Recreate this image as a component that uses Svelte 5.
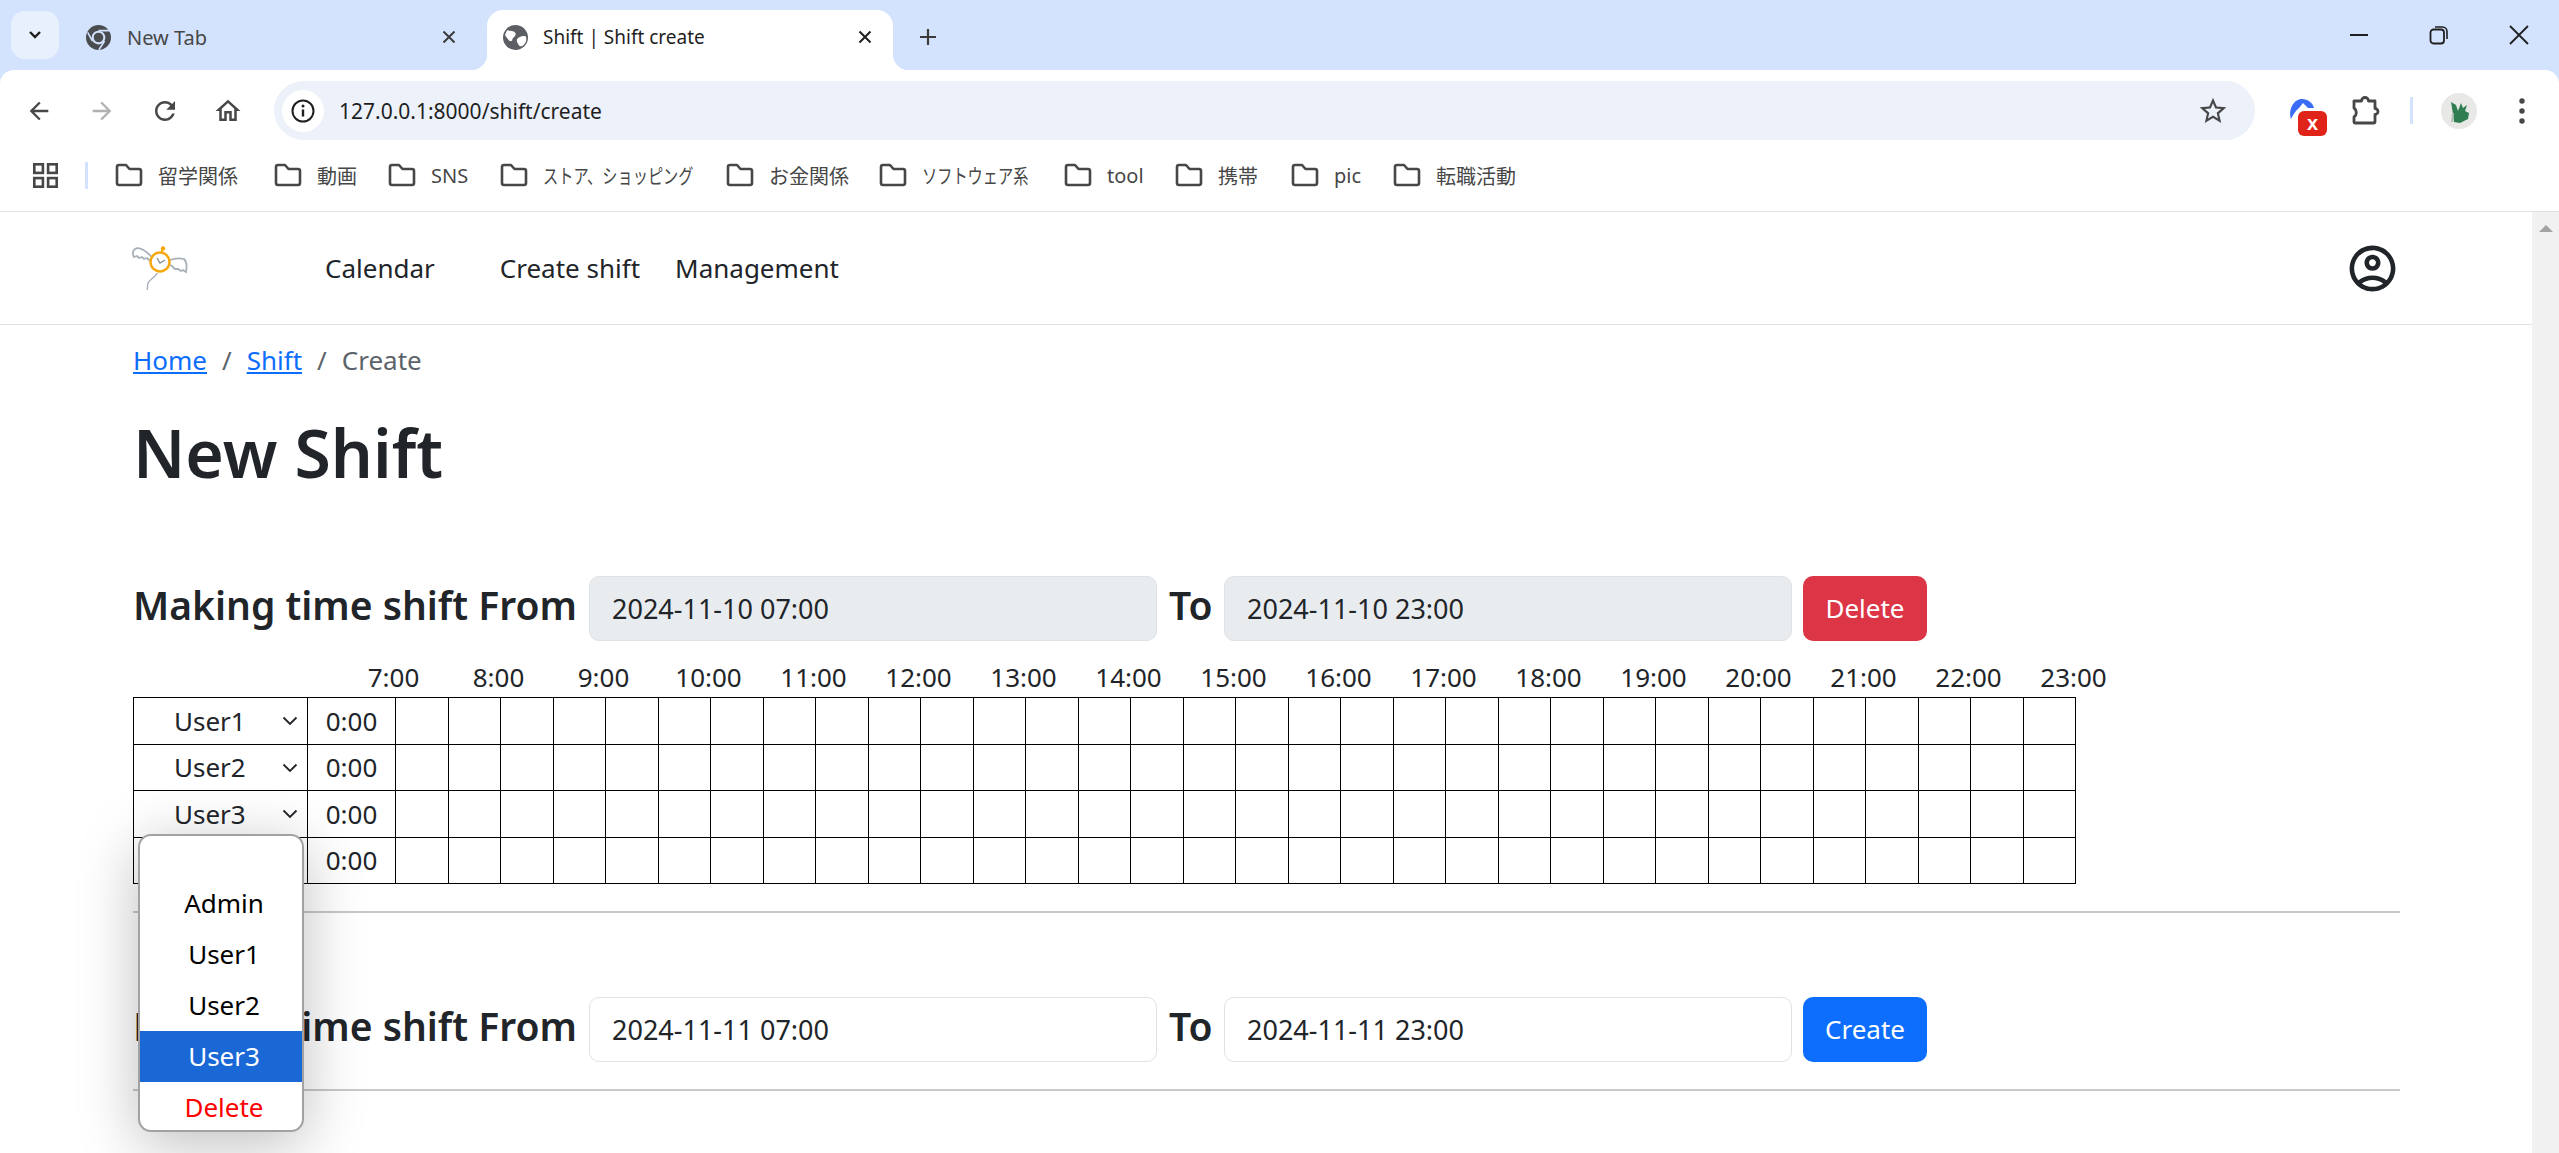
<script>
	const bookmarks = [
		{ label: '留学関係', width: 159 },
		{ label: '動画', width: 114 },
		{ label: 'SNS', width: 112 },
		{ label: 'ストア、ショッピング', width: 226, narrow: true },
		{ label: 'お金関係', width: 153 },
		{ label: 'ソフトウェア系', width: 185, narrow: true },
		{ label: 'tool', width: 111 },
		{ label: '携帯', width: 116 },
		{ label: 'pic', width: 102 },
		{ label: '転職活動', width: 124 }
	];

	const hours = Array.from({ length: 17 }, (_, i) => `${i + 7}:00`);
	const cells = Array.from({ length: 32 }, (_, i) => i);
	const rows = ['User1', 'User2', 'User3', ''];
	const options = ['Admin', 'User1', 'User2', 'User3'];
</script>

<div class="window">
	<div class="tabstrip">
		<button class="tab-search" aria-label="Search tabs">
			<svg width="14" height="10" viewBox="0 0 14 10"><path d="M2 2l5 5 5-5" fill="none" stroke="#1f1f1f" stroke-width="2.4"/></svg>
		</button>
		<div class="tab">
			<svg class="favicon" viewBox="0 0 24 24">
				<circle cx="12" cy="12" r="12" fill="#4a4d50"/>
				<circle cx="12" cy="12" r="6.6" fill="#d3e3fd"/>
				<circle cx="12" cy="12" r="4.6" fill="#4a4d50"/>
				<path d="M12 5.4h10.4M6.2 15.4L1.6 7M17.8 15.4l-5.4 8.4" stroke="#d3e3fd" stroke-width="1.5" fill="none"/>
			</svg>
			<span class="tab-title">New Tab</span>
			<svg class="tab-close" viewBox="0 0 14 14"><path d="M1.5 1.5l11 11M12.5 1.5l-11 11" stroke="#3c3c3c" stroke-width="2"/></svg>
		</div>
		<div class="tab active">
			<svg class="favicon" viewBox="0 0 24 24">
				<circle cx="12" cy="12" r="12" fill="#5b5e62"/>
				<path d="M4 5c3 1 7 0 8 3s-3 4-3 6-3 2-4 0-3-3-3-5zM22 11c-3-1-6 0-8 2s0 4 1 6 3 2 5 0 3-5 2-8z" fill="#fff"/>
			</svg>
			<span class="tab-title">Shift | Shift create</span>
			<svg class="tab-close" viewBox="0 0 14 14"><path d="M1.5 1.5l11 11M12.5 1.5l-11 11" stroke="#1f1f1f" stroke-width="2"/></svg>
		</div>
		<div class="new-tab">
			<svg width="20" height="20" viewBox="0 0 20 20"><path d="M10 2v16M2 10h16" stroke="#3c3c3c" stroke-width="2.2"/></svg>
		</div>
		<div class="window-controls">
			<span><svg width="20" height="20" viewBox="0 0 20 20"><path d="M1 10h18" stroke="#1f1f1f" stroke-width="2"/></svg></span>
			<span><svg width="20" height="20" viewBox="0 0 20 20"><rect x="1.5" y="4.5" width="13.5" height="14" rx="3" fill="none" stroke="#1f1f1f" stroke-width="1.8"/><path d="M6 2h7.5a4.5 4.5 0 0 1 4.5 4.5V14" fill="none" stroke="#1f1f1f" stroke-width="1.6"/></svg></span>
			<span><svg width="20" height="20" viewBox="0 0 20 20"><path d="M1 1l18 18M19 1L1 19" stroke="#1f1f1f" stroke-width="1.8"/></svg></span>
		</div>
	</div>

	<div class="toolbar">
		<div class="tool">
			<svg width="28" height="28" viewBox="0 0 24 24"><path fill="#474747" d="M20 11H7.83l5.59-5.59L12 4l-8 8 8 8 1.41-1.41L7.83 13H20v-2z"/></svg>
		</div>
		<div class="tool">
			<svg width="28" height="28" viewBox="0 0 24 24"><path fill="#b1b1b1" d="M4 11h12.17l-5.59-5.59L12 4l8 8-8 8-1.41-1.41L16.17 13H4v-2z"/></svg>
		</div>
		<div class="tool">
			<svg width="30" height="30" viewBox="0 0 24 24"><path fill="#474747" d="M17.65 6.35C16.2 4.9 14.21 4 12 4c-4.42 0-7.99 3.58-7.99 8s3.57 8 7.99 8c3.73 0 6.84-2.55 7.73-6h-2.08c-.82 2.33-3.04 4-5.65 4-3.31 0-6-2.69-6-6s2.69-6 6-6c1.66 0 3.14.69 4.22 1.78L13 11h7V4l-2.35 2.35z"/></svg>
		</div>
		<div class="tool">
			<svg width="30" height="30" viewBox="0 0 24 24"><path fill="#474747" d="M12 5.69l5 4.5V18h-2v-6H9v6H7v-7.81l5-4.5M12 3L2 12h3v8h6v-6h2v6h6v-8h3L12 3z"/></svg>
		</div>

		<div class="omnibox">
			<div class="site-info">
				<svg width="26" height="26" viewBox="0 0 26 26">
					<circle cx="13" cy="13" r="10.5" fill="none" stroke="#1f1f1f" stroke-width="2"/>
					<path d="M13 11.5v7" stroke="#1f1f1f" stroke-width="2.4"/>
					<circle cx="13" cy="8" r="1.5" fill="#1f1f1f"/>
				</svg>
			</div>
			<span class="url">127.0.0.1:8000/shift/create</span>
			<svg class="star" width="32" height="32" viewBox="0 0 24 24"><path fill="#474747" d="M22 9.24l-7.19-.62L12 2 9.19 8.63 2 9.24l5.46 4.73L5.82 21 12 17.27 18.18 21l-1.63-7.03L22 9.24zM12 15.4l-3.76 2.27 1-4.28-3.32-2.88 4.38-.38L12 6.1l1.71 4.04 4.38.38-3.32 2.88 1 4.28L12 15.4z"/></svg>
		</div>

		<div class="tool ext">
			<svg class="ext-arc" width="30" height="30" viewBox="0 0 30 30"><path fill="#3b6cf6" d="M5 24C2 14 8 4 16 4c6 0 11 4 12 9H22l-5-5-4 5c-4 3-6 7-8 11z"/></svg>
			<span class="ext-badge">x</span>
		</div>
		<div class="tool">
			<svg width="34" height="34" viewBox="0 0 34 34" fill="none" stroke="#474747" stroke-width="2.8" stroke-linejoin="round">
				<path d="M6 7h7.5a3.5 3.5 0 0 1 7 0H27v7.5a3 3 0 0 1 0 6V28a1 1 0 0 1-1 1H7a1 1 0 0 1-1-1v-5a5.5 5.5 0 0 0 0-9V8a1 1 0 0 1 0-1z"/>
			</svg>
		</div>
		<div class="divider"></div>
		<div class="tool avatar-slot">
			<div class="avatar">
				<svg width="36" height="36" viewBox="0 0 36 36"><path fill="#2f7d50" d="M10 9l5 3 2 6 3-8 2 5 4-3-2 6 4 2-1 6-8 4-6-1-1-8z"/><path d="M12 20l-1 9" stroke="#b9bdb8" stroke-width="2"/></svg>
			</div>
		</div>
		<div class="tool">
			<svg width="8" height="30" viewBox="0 0 8 30"><circle cx="4" cy="5" r="2.7" fill="#474747"/><circle cx="4" cy="15" r="2.7" fill="#474747"/><circle cx="4" cy="25" r="2.7" fill="#474747"/></svg>
		</div>
	</div>

	<div class="bookmarks">
		<svg class="apps" width="25" height="25" viewBox="0 0 25 25" fill="none" stroke="#474747" stroke-width="2.6">
			<rect x="1.3" y="1.3" width="8.6" height="8.6"/><rect x="15.1" y="1.3" width="8.6" height="8.6"/>
			<rect x="1.3" y="15.1" width="8.6" height="8.6"/><rect x="15.1" y="15.1" width="8.6" height="8.6"/>
		</svg>
		<div class="bookmark-sep"></div>
		{#each bookmarks as b}
			<div class="bookmark" style="width: {b.width}px">
				<svg width="28" height="24" viewBox="0 0 28 24"><path d="M2 4a2 2 0 0 1 2-2h7l3.5 4H24a2 2 0 0 1 2 2v12a2 2 0 0 1-2 2H4a2 2 0 0 1-2-2z" fill="none" stroke="#474747" stroke-width="2.6" stroke-linejoin="round"/></svg>
				<span class:narrow={b.narrow}>{b.label}</span>
			</div>
		{/each}
	</div>

	<div class="viewport">
		<div class="page">
			<nav class="navbar">
				<svg class="logo" width="70" height="56" viewBox="0 0 70 56">
					<path d="M27 17C20 10 14 6 10 9c-3 2-2 6-1 8l3-1 2 2 3-1 2 2 3-1 3 3M45 20c5-2 10-2 14-1 3 3 3 8 2 13l-3-2-2 1-3-2h-3l-3-3-2-1" fill="#fff" stroke="#a9b0b8" stroke-width="1.8"/>
					<path d="M32 33c-1 4-7 6-9 10-1 3 0 5-1 7" fill="none" stroke="#a9b0b8" stroke-width="1.4"/>
					<circle cx="35" cy="22" r="9.500" fill="#fff" stroke="#f6a80c" stroke-width="2.400"/>
					<circle cx="38" cy="8.500" r="2.200" fill="#f6a80c"/>
					<path d="M37 10v3" stroke="#f6a80c" stroke-width="2"/>
					<path d="M32 18l3 5 5-3" fill="none" stroke="#8a8f95" stroke-width="1.400"/>
				</svg>
				<a class="nav-link calendar" href="#calendar">Calendar</a>
				<a class="nav-link create" href="#create">Create shift</a>
				<a class="nav-link" href="#management">Management</a>
				<svg class="account" width="55" height="55" viewBox="0 0 24 24">
					<path fill="#212529" d="M12 2C6.48 2 2 6.48 2 12s4.48 10 10 10 10-4.48 10-10S17.52 2 12 2zM7.35 18.5C8.66 17.56 10.26 17 12 17s3.34.56 4.65 1.5c-1.31.94-2.91 1.5-4.65 1.5s-3.34-.56-4.65-1.5zm10.79-1.38C16.45 15.8 14.32 15 12 15s-4.45.8-6.14 2.12C4.7 15.73 4 13.95 4 12c0-4.42 3.58-8 8-8s8 3.58 8 8c0 1.95-.7 3.73-1.86 5.12z"/>
					<path fill="#212529" d="M12 6c-1.93 0-3.5 1.57-3.5 3.5S10.07 13 12 13s3.500-1.570 3.500-3.500S13.930 6 12 6zm0 5c-.83 0-1.500-.67-1.500-1.500S11.170 8 12 8s1.500.67 1.500 1.500S12.830 11 12 11z"/>
				</svg>
			</nav>

			<main class="container">
				<div class="breadcrumb">
					<a href="#home">Home</a><span class="slash">/</span><a href="#shift">Shift</a><span class="slash">/</span><span class="current">Create</span>
				</div>
				<h1>New Shift</h1>

				<div class="shift-row first">
					<h3>Making time shift From</h3>
					<input class="date" disabled value="2024-11-10 07:00" />
					<h3 class="to">To</h3>
					<input class="date" disabled value="2024-11-10 23:00" />
					<button class="btn danger">Delete</button>
				</div>

				<div class="hours">
					{#each hours as h}
						<span>{h}</span>
					{/each}
				</div>

				<table class="grid">
					<tbody>
						{#each rows as user, r}
							<tr>
								<td class="user">
									{#if user}
										<span class="user-name">{user}</span>
										<svg class="chevron" width="16" height="10" viewBox="0 0 16 10"><path d="M1.500 1.500L8 8l6.500-6.500" fill="none" stroke="#212529" stroke-width="1.800"/></svg>
									{/if}
									{#if r === 3}
										<div class="dropdown">
											{#each options as o}
												<div class="option" class:selected={o === 'User3'}>{o}</div>
											{/each}
											<div class="option remove">Delete</div>
										</div>
									{/if}
								</td>
								<td class="total">0:00</td>
								{#each cells as c}
									<td class="slot" data-cell={c}></td>
								{/each}
							</tr>
						{/each}
					</tbody>
				</table>

				<hr class="rule-one" />

				<div class="shift-row second">
					<h3>Making time shift From</h3>
					<input class="date open" value="2024-11-11 07:00" />
					<h3 class="to">To</h3>
					<input class="date open" value="2024-11-11 23:00" />
					<button class="btn primary">Create</button>
				</div>

				<hr class="rule-two" />
			</main>
		</div>
		<div class="scrollbar"><span class="scroll-up"></span></div>
	</div>
</div>

<style>
	:global(body) {
		margin: 0;
		overflow: hidden;
	}

	.window {
		width: 2559px;
		height: 1153px;
		display: flex;
		flex-direction: column;
		overflow: hidden;
		background: #d3e3fd;
		font-family: "Noto Sans", "Noto Sans CJK JP", sans-serif;
		color: #212529;
	}

	/* Tab strip */
	.tabstrip {
		height: 70px;
		display: flex;
		align-items: flex-end;
		flex: none;
	}

	.tab-search {
		width: 48px;
		height: 48px;
		margin: 0 12px 11px 11px;
		padding: 0;
		border: none;
		border-radius: 14px;
		background: #e9f0fd;
		display: flex;
		align-items: center;
		justify-content: center;
	}

	.tab {
		width: 416px;
		height: 60px;
		box-sizing: border-box;
		padding: 0 27px 6px 15px;
		display: flex;
		align-items: center;
		gap: 16px;
		position: relative;
		color: #474747;
		font-size: 20px;
	}

	.tab.active {
		width: 406px;
		padding: 0 17px 6px 16px;
		gap: 15px;
		background: #fff;
		border-radius: 16px 16px 0 0;
		color: #1f1f1f;
		font-size: 19px;
	}

	.tab.active::before,
	.tab.active::after {
		content: "";
		position: absolute;
		bottom: 0;
		width: 16px;
		height: 16px;
	}

	.tab.active::before {
		left: -16px;
		background: radial-gradient(circle at 0 0, transparent 16px, #fff 16.5px);
	}

	.tab.active::after {
		right: -16px;
		background: radial-gradient(circle at 100% 0, transparent 16px, #fff 16.5px);
	}

	.favicon {
		width: 25px;
		height: 25px;
		flex: none;
	}

	.tab-title {
		white-space: nowrap;
	}

	.tab-close {
		width: 14px;
		height: 14px;
		margin-left: auto;
		margin-right: 4px;
	}

	.new-tab {
		width: 70px;
		height: 60px;
		padding-bottom: 6px;
		box-sizing: border-box;
		display: flex;
		align-items: center;
		justify-content: center;
	}

	.window-controls {
		margin-left: auto;
		height: 70px;
		display: flex;
	}

	.window-controls span {
		width: 80px;
		display: flex;
		align-items: center;
		justify-content: center;
	}

	/* Toolbar */
	.toolbar {
		height: 71px;
		flex: none;
		box-sizing: border-box;
		padding: 11px 0 1px 7px;
		display: flex;
		align-items: center;
		background: #fff;
		border-radius: 14px 14px 0 0;
	}

	.tool {
		width: 63px;
		height: 59px;
		flex: none;
		display: flex;
		align-items: center;
		justify-content: center;
		position: relative;
	}

	.omnibox {
		width: 1981px;
		height: 59px;
		margin-left: 15px;
		flex: none;
		box-sizing: border-box;
		padding: 0 26px 0 8px;
		display: flex;
		align-items: center;
		background: #ecf1fa;
		border-radius: 30px;
	}

	.site-info {
		width: 42px;
		height: 42px;
		border-radius: 50%;
		background: #fff;
		display: flex;
		align-items: center;
		justify-content: center;
	}

	.url {
		margin-left: 15px;
		font-size: 21px;
		color: #1f1f1f;
	}

	.star {
		margin-left: auto;
	}

	.ext {
		margin-left: 15px;
	}

	.ext-arc {
		position: absolute;
		left: 16px;
		top: 14px;
	}

	.ext-badge {
		position: absolute;
		left: 28px;
		top: 30px;
		width: 29px;
		height: 25px;
		border-radius: 6px;
		background: #e0241a;
		color: #fff;
		font-family: "Liberation Sans", sans-serif;
		font-size: 20px;
		font-weight: 700;
		line-height: 24px;
		text-align: center;
	}

	.divider {
		width: 3px;
		height: 27px;
		margin-left: 14px;
		background: #d3e3fd;
	}

	.avatar-slot {
		margin-left: 14px;
	}

	.avatar {
		width: 36px;
		height: 36px;
		border-radius: 50%;
		background: #e8e9e6;
		overflow: hidden;
	}

	/* Bookmarks */
	.bookmarks {
		height: 71px;
		flex: none;
		box-sizing: border-box;
		padding: 0 0 2px 33px;
		display: flex;
		align-items: center;
		background: #fff;
		border-bottom: 1px solid #e2e2e2;
	}

	.apps {
		flex: none;
	}

	.bookmark-sep {
		width: 3px;
		height: 27px;
		margin: 0 27px 0 27px;
		background: #d3e3fd;
	}

	.bookmark {
		flex: none;
		display: flex;
		align-items: center;
		gap: 15px;
		font-size: 20px;
		color: #474747;
		white-space: nowrap;
	}

	.bookmark svg {
		flex: none;
	}

	.narrow {
		display: inline-block;
		transform: scaleX(0.76);
		transform-origin: left center;
	}

	/* Page */
	.viewport {
		flex: 1;
		display: flex;
		min-height: 0;
		background: #fff;
	}

	.page {
		flex: 1;
		min-width: 0;
	}

	.scrollbar {
		width: 27px;
		flex: none;
		background: #f1f1f1;
		display: flex;
		justify-content: center;
		padding-top: 13px;
		box-sizing: border-box;
	}

	.scroll-up {
		width: 0;
		height: 0;
		border-left: 7px solid transparent;
		border-right: 7px solid transparent;
		border-bottom: 7px solid #a3a3a3;
	}

	.navbar {
		height: 112px;
		box-sizing: content-box;
		padding: 0 137px 0 125px;
		display: flex;
		align-items: center;
		border-bottom: 1px solid #dee2e6;
	}

	.logo {
		margin-right: 130px;
		flex: none;
	}

	.nav-link {
		font-size: 26px;
		color: #212529;
		text-decoration: none;
		white-space: nowrap;
	}

	.nav-link.calendar {
		margin-right: 65px;
	}

	.nav-link.create {
		margin-right: 35px;
	}

	.account {
		margin-left: auto;
		margin-right: -5px;
	}

	.container {
		padding: 15px 0 0 133px;
		width: 2267px;
	}

	.breadcrumb {
		height: 40px;
		display: flex;
		align-items: center;
		font-size: 26px;
	}

	.breadcrumb a {
		color: #0d6efd;
	}

	.slash {
		margin: 0 15px;
		color: #5c636a;
	}

	.current {
		color: #5c636a;
	}

	h1 {
		margin: 32px 0 0;
		height: 80px;
		font-size: 66px;
		font-weight: 600;
		line-height: 80px;
	}

	.shift-row {
		display: flex;
		align-items: center;
		height: 66px;
	}

	.shift-row.first {
		margin-top: 83px;
	}

	.shift-row.second {
		margin-top: 83px;
	}

	h3 {
		width: 456px;
		flex: none;
		margin: 0 0 6px;
		font-size: 39px;
		font-weight: 600;
		line-height: 54px;
		white-space: nowrap;
	}

	h3.to {
		width: 67px;
		padding-left: 12px;
		box-sizing: border-box;
	}

	.date {
		width: 568px;
		height: 65px;
		flex: none;
		box-sizing: border-box;
		padding: 0 22px;
		border: 1px solid #dee2e6;
		border-radius: 10px;
		background: #e9ecef;
		color: #212529;
		font-family: inherit;
		font-size: 27px;
		opacity: 1;
	}

	.date.open {
		background: #fff;
	}

	.btn {
		width: 124px;
		height: 65px;
		margin-left: 11px;
		flex: none;
		border: none;
		border-radius: 10px;
		padding: 0;
		color: #fff;
		font-family: inherit;
		font-size: 26px;
	}

	.danger {
		background: #dc3545;
	}

	.primary {
		background: #0d6efd;
	}

	.hours {
		display: flex;
		height: 36px;
		margin: 18px 0 2px 208px;
		line-height: 36px;
		font-size: 26px;
	}

	.hours span {
		width: 105px;
		flex: none;
		text-align: center;
	}

	.grid {
		width: 1942px;
		table-layout: fixed;
		border-collapse: collapse;
	}

	.grid td {
		height: 46.500px;
		box-sizing: border-box;
		padding: 0;
		border: 1.500px solid #000;
		font-size: 26px;
		text-align: center;
	}

	.grid td.user {
		width: 174px;
		position: relative;
		text-align: left;
	}

	.grid td.total {
		width: 88px;
	}

	.grid td.slot {
		width: 52.500px;
	}

	.user-name {
		padding-left: 40px;
		color: #212529;
	}

	.chevron {
		position: absolute;
		right: 9px;
		top: 18px;
	}

	.dropdown {
		position: absolute;
		left: 4px;
		top: -4px;
		z-index: 5;
		width: 166px;
		height: 298px;
		box-sizing: border-box;
		padding-top: 42px;
		background: #fff;
		border: 2px solid #a2a2a2;
		border-radius: 13px;
		box-shadow: 0 12px 60px rgba(0, 0, 0, 0.26);
		overflow: hidden;
		text-align: center;
		color: #000;
	}

	.option {
		height: 51px;
		line-height: 51px;
		padding-left: 6px;
	}

	.option.selected {
		background: #1a68d6;
		color: #fff;
	}

	.option.remove {
		color: #f00;
	}

	hr {
		margin: 0;
		border: none;
		height: 2px;
		width: 2267px;
		background: #c8c8c8;
	}

	.rule-one {
		margin-top: 27px;
	}

	.rule-two {
		margin-top: 27px;
	}
</style>
